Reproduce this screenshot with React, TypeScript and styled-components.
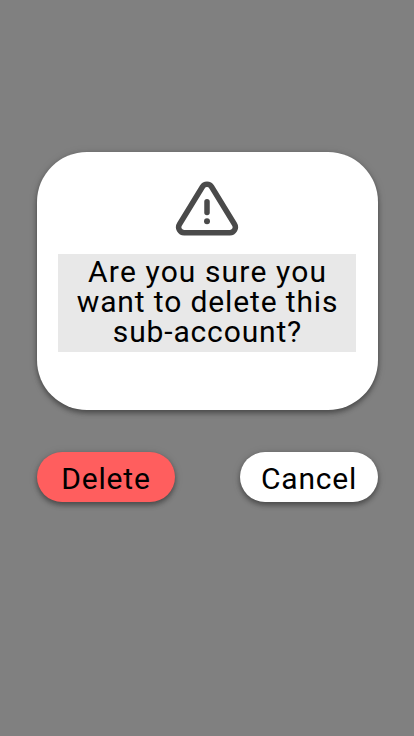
import React from "react";
import styled, { createGlobalStyle } from "styled-components";

const GlobalStyle = createGlobalStyle`
  * { box-sizing: border-box; }
  body { margin: 0; background: #808080; }
`;

const elevation = `
  0 2px 5px rgba(0, 0, 0, 0.26),
  0 4px 5px rgba(0, 0, 0, 0.16),
  0 1px 10px rgba(0, 0, 0, 0.12)
`;

const Screen = styled.main`
  width: 414px;
  height: 736px;
  padding: 152px 36px 0 37px;
  overflow: hidden;
  background: #808080;
  font-family: Roboto, sans-serif;
  color: #000;
`;

const Card = styled.section`
  display: flex;
  flex-direction: column;
  align-items: center;
  height: 258px;
  padding: 29px 22px 0 21px;
  border-radius: 50px;
  background: #fff;
  box-shadow: ${elevation};
`;

const WarningIcon = styled.svg`
  display: block;
  width: 64px;
  height: 56px;
`;

const Message = styled.p`
  width: 298px;
  height: 98px;
  margin: 17px 0 0;
  padding: 3px 0 0 1px;
  background: #e8e8e8;
  text-align: center;
  font-size: 30px;
  line-height: 30px;
  font-kerning: none;
`;

const Line = styled.span<{ $tracking: number }>`
  display: block;
  letter-spacing: ${({ $tracking }) => $tracking}px;
`;

const Actions = styled.div`
  display: flex;
  justify-content: space-between;
  margin-top: 42px;
`;

const Button = styled.button<{ $danger?: boolean }>`
  width: 138px;
  height: 50px;
  padding: 4px 0 0;
  border: 0;
  border-radius: 25px;
  background: ${({ $danger }) => ($danger ? "#ff5e5e" : "#fff")};
  box-shadow: ${elevation};
  color: #000;
  font: 400 30px/30px Roboto, sans-serif;
  letter-spacing: 0.8px;
`;

export default function App() {
  return (
    <Screen>
      <GlobalStyle />
      <Card>
        <WarningIcon viewBox="0 0 64 56" fill="none" stroke="#4a4a4a" strokeWidth="5.5" strokeLinecap="round" strokeLinejoin="round">
          <path d="M27.3 6A5.5 5.5 0 0 1 36.7 6L59.5 43.3A5.5 5.5 0 0 1 54.8 51.7H9.2A5.5 5.5 0 0 1 4.5 43.3Z" />
          <path d="M32 20.8V31.6" />
          <circle cx="32" cy="40.3" r="3" fill="#4a4a4a" stroke="none" />
        </WarningIcon>
        <Message>
          <Line $tracking={1.08}>Are you sure you</Line>
          <Line $tracking={0.85}>want to delete this</Line>
          <Line $tracking={0.85}>sub-account?</Line>
        </Message>
      </Card>
      <Actions>
        <Button type="button" $danger>Delete</Button>
        <Button type="button">Cancel</Button>
      </Actions>
    </Screen>
  );
}
